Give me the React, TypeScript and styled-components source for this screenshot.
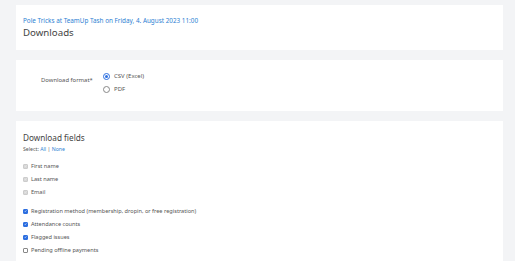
import React from "react";
import styled, { createGlobalStyle } from "styled-components";

const Global = createGlobalStyle`
  html, body { margin: 0; padding: 0; background: #f3f4f6; }
  body { font-family: "Noto Sans", "Open Sans", sans-serif; color: #444; }
`;

const Page = styled.div`
  display: flex;
  flex-direction: column;
  gap: 10px;
  padding: 5px 12px 0 16px;
`;

const Card = styled.section<{ $h?: number }>`
  background: #fff;
  padding: 0 7px;
  box-sizing: border-box;
  ${(p) => (p.$h ? `height: ${p.$h}px;` : "")}
`;

const Header = styled.div`
  padding-top: 11px;
  display: flex;
  flex-direction: column;
`;

const Sub = styled.div`
  font-size: 6.35px;
  line-height: 10px;
  color: #2d7fd3;
`;

const Title = styled.h1`
  margin: 0;
  font-size: 9.7px;
  line-height: 14px;
  font-weight: 400;
  color: #444;
`;

const FormRow = styled.div`
  display: grid;
  grid-template-columns: 62px 1fr;
  padding: 11px 0 0 18px;
`;

const Label = styled.div`
  font-size: 5.9px;
  line-height: 10px;
  padding-top: 4px;
  color: #555;
`;

const Options = styled.div`
  display: flex;
  flex-direction: column;
  gap: 3px;
`;

const Opt = styled.label`
  display: flex;
  align-items: center;
  gap: 4px;
  font-size: 6px;
  line-height: 10px;
  color: #555;
`;

const Radio = styled.span<{ $on?: boolean }>`
  width: 5px;
  height: 5px;
  border-radius: 50%;
  border: 0.8px solid ${(p) => (p.$on ? "#2d6fe0" : "#888")};
  background: #fff;
  display: inline-flex;
  align-items: center;
  justify-content: center;
  &::after {
    content: "";
    width: 3px;
    height: 3px;
    border-radius: 50%;
    background: ${(p) => (p.$on ? "#2d6fe0" : "transparent")};
  }
`;

const FieldsHeader = styled.div`
  padding-top: 11px;
`;

const H2 = styled.h2`
  margin: 0;
  font-size: 8.2px;
  line-height: 12px;
  font-weight: 400;
  color: #444;
`;

const Select = styled.div`
  font-size: 5.2px;
  line-height: 10px;
  color: #555;
  a { color: #2d7fd3; text-decoration: none; }
`;

const Group = styled.div`
  display: flex;
  flex-direction: column;
  gap: 3px;
  padding-top: 7px;
  & + & { padding-top: 9px; }
`;

const Check = styled.label`
  display: flex;
  align-items: center;
  gap: 3px;
  font-size: 5.6px;
  line-height: 10px;
  color: #555;
`;

const Box = styled.span<{ $state: "disabled" | "on" | "off" }>`
  width: 5px;
  height: 5px;
  border-radius: 1px;
  box-sizing: border-box;
  display: inline-flex;
  align-items: center;
  justify-content: center;
  background: ${(p) =>
    p.$state === "on" ? "#2d6fe0" : p.$state === "disabled" ? "#d8d8d8" : "#fff"};
  border: 0.8px solid
    ${(p) => (p.$state === "on" ? "#2d6fe0" : p.$state === "disabled" ? "#cccccc" : "#888")};
`;

const CheckMark = ({ color }: { color: string }) => (
  <svg width="4" height="4" viewBox="0 0 10 10">
    <path d="M2 5.2 L4.2 7.4 L8.2 2.6" fill="none" stroke={color} strokeWidth="1.8" />
  </svg>
);

const Field = ({ state, label }: { state: "disabled" | "on" | "off"; label: string }) => (
  <Check>
    <Box $state={state}>
      {state === "on" && <CheckMark color="#fff" />}
      {state === "disabled" && <CheckMark color="#f2f2f2" />}
    </Box>
    {label}
  </Check>
);

export default function App() {
  return (
    <>
      <Global />
      <Page>
        <Card $h={45}>
          <Header>
            <Sub>Pole Tricks at TeamUp Tash on Friday, 4. August 2023 11:00</Sub>
            <Title>Downloads</Title>
          </Header>
        </Card>
        <Card $h={51}>
          <FormRow>
            <Label>Download format*</Label>
            <Options>
              <Opt>
                <Radio $on />
                CSV (Excel)
              </Opt>
              <Opt>
                <Radio />
                PDF
              </Opt>
            </Options>
          </FormRow>
        </Card>
        <Card $h={150}>
          <FieldsHeader>
            <H2>Download fields</H2>
            <Select>
              Select: <a href="#">All</a> | <a href="#">None</a>
            </Select>
          </FieldsHeader>
          <Group>
            <Field state="disabled" label="First name" />
            <Field state="disabled" label="Last name" />
            <Field state="disabled" label="Email" />
          </Group>
          <Group>
            <Field state="on" label="Registration method (membership, dropin, or free registration)" />
            <Field state="on" label="Attendance counts" />
            <Field state="on" label="Flagged issues" />
            <Field state="off" label="Pending offline payments" />
          </Group>
        </Card>
      </Page>
    </>
  );
}
